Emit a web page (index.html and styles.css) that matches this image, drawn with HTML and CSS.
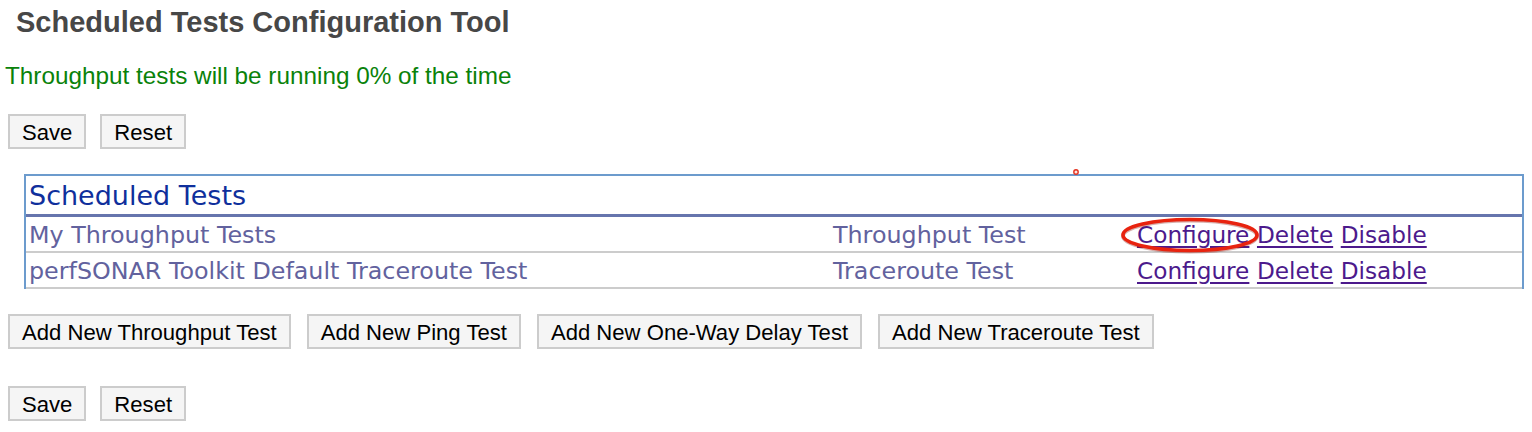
FILE: index.html
```html
<!DOCTYPE html>
<html lang="en">
<head>
<meta charset="utf-8">
<title>Scheduled Tests Configuration Tool</title>
<link rel="stylesheet" href="styles.css">
</head>
<body>
<div class="page">
  <h1 class="title">Scheduled Tests Configuration Tool</h1>
  <p class="summary">Throughput tests will be running 0% of the time</p>

  <div class="actions actions-top">
    <button class="btn" type="button">Save</button>
    <button class="btn" type="button">Reset</button>
  </div>

  <div class="tests-wrap">
    <table class="tests">
      <colgroup>
        <col class="col-name">
        <col class="col-type">
        <col class="col-ops">
      </colgroup>
      <thead>
        <tr><th colspan="3">Scheduled Tests</th></tr>
      </thead>
      <tbody>
        <tr>
          <td>My Throughput Tests</td>
          <td>Throughput Test</td>
          <td><a href="#">Configure</a> <a href="#">Delete</a> <a href="#">Disable</a></td>
        </tr>
        <tr>
          <td>perfSONAR Toolkit Default Traceroute Test</td>
          <td>Traceroute Test</td>
          <td><a href="#">Configure</a> <a href="#">Delete</a> <a href="#">Disable</a></td>
        </tr>
      </tbody>
    </table>
    <svg class="mark-dot" width="8" height="8" viewBox="0 0 8 8" aria-hidden="true">
      <circle cx="4" cy="4" r="2.2" fill="#fbe3df" stroke="#e4321f" stroke-width="1.4"/>
    </svg>
    <svg class="mark-ring" width="144" height="40" viewBox="0 0 144 40" aria-hidden="true">
      <ellipse cx="72" cy="21" rx="67" ry="15.5" fill="none" stroke="#8a1a10" stroke-opacity="0.35" stroke-width="4"/>
      <ellipse cx="72" cy="20" rx="67" ry="15.5" fill="none" stroke="#e8230f" stroke-width="3.6"/>
    </svg>
  </div>

  <div class="actions actions-add">
    <button class="btn" type="button">Add New Throughput Test</button>
    <button class="btn" type="button">Add New Ping Test</button>
    <button class="btn" type="button">Add New One-Way Delay Test</button>
    <button class="btn" type="button">Add New Traceroute Test</button>
  </div>

  <div class="actions actions-bottom">
    <button class="btn" type="button">Save</button>
    <button class="btn" type="button">Reset</button>
  </div>
</div>
</body>
</html>
```

FILE: styles.css
```css
html, body {
  margin: 0;
  padding: 0;
  background: #ffffff;
}

.page {
  padding-top: 5px;
  font-family: "Liberation Sans", Arial, Helvetica, sans-serif;
}

.title {
  margin: 0 0 0 16px;
  font-size: 29px;
  line-height: 34px;
  font-weight: bold;
  color: #474747;
}

.summary {
  margin: 23px 0 0 5px;
  font-size: 24.3px;
  line-height: 28px;
  color: #0a820a;
}

.actions {
  display: flex;
  align-items: flex-start;
  padding-left: 8px;
}

.actions-top {
  margin-top: 24px;
  gap: 14px;
}

.actions-add {
  margin-top: 25px;
  gap: 16px;
}

.actions-bottom {
  margin-top: 37px;
  gap: 14px;
}

.btn {
  margin: 0;
  padding: 4px 12px 2px;
  font-family: "Liberation Sans", Arial, Helvetica, sans-serif;
  font-size: 22.1px;
  line-height: 25px;
  color: #000000;
  background: #f5f5f5;
  border: 2px solid #cccccc;
  border-radius: 0;
  white-space: nowrap;
}

.tests-wrap {
  position: relative;
  margin: 25px 0 0 24px;
  width: 1500px;
}

.tests {
  width: 1500px;
  table-layout: fixed;
  border-collapse: separate;
  border-spacing: 0;
  border-top: 2px solid #6c9bcd;
  border-left: 2px solid #6c9bcd;
  border-right: 2px solid #6c9bcd;
  font-family: "DejaVu Sans", "Lucida Grande", Verdana, sans-serif;
}

.col-name { width: 804px; }
.col-type { width: 304px; }
.col-ops { width: auto; }

.tests th {
  padding: 4px 3px 3px;
  height: 31px;
  text-align: left;
  font-weight: normal;
  font-size: 27px;
  line-height: 31px;
  color: #0f2f9c;
  border-bottom: 3px solid #6675ad;
}

.tests td {
  padding: 4px 3px 2px;
  font-size: 23.8px;
  line-height: 28px;
  color: #62629e;
  border-bottom: 2px solid #cccccc;
  white-space: nowrap;
}

.tests td a {
  font-size: 23.2px;
  color: #4c1a8c;
  text-decoration: underline;
  text-decoration-thickness: 2px;
  text-underline-offset: 3px;
}

.mark-dot {
  position: absolute;
  left: 1048px;
  top: -6px;
}

.mark-ring {
  position: absolute;
  left: 1094px;
  top: 41px;
}
```
